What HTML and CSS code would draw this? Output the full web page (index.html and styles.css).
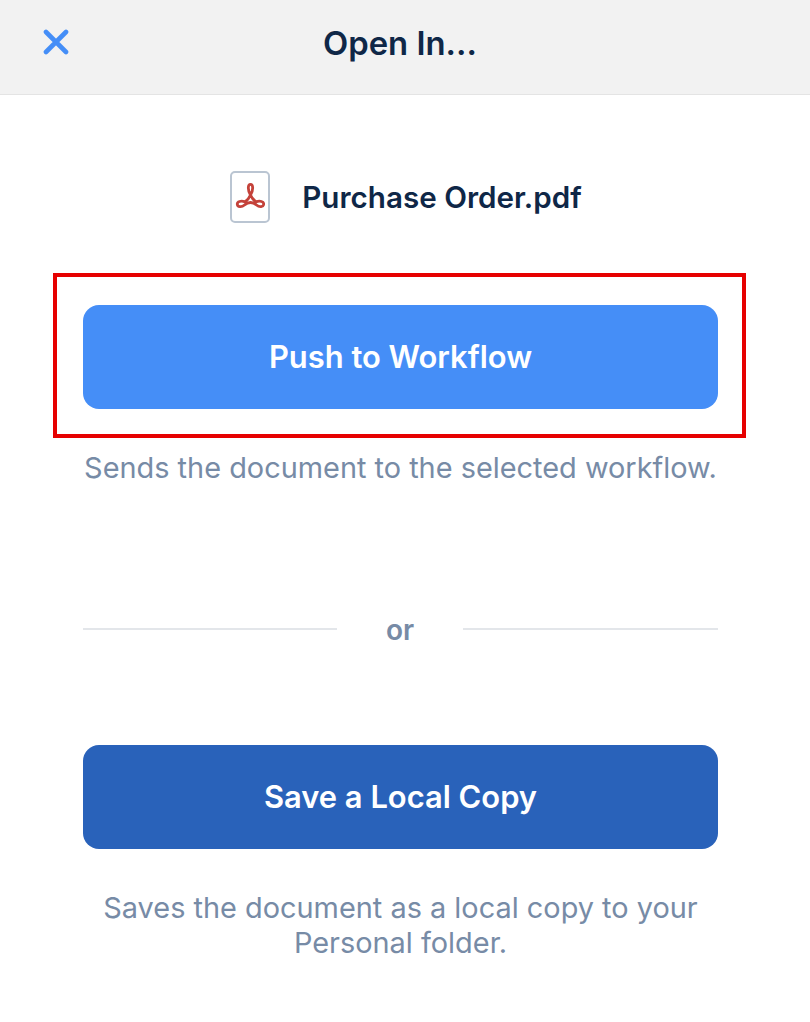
FILE: index.html
```html
<!DOCTYPE html>
<html lang="en">
<head>
<meta charset="utf-8">
<title>Open In...</title>
<link rel="stylesheet" href="styles.css">
</head>
<body>
<header class="topbar">
  <button class="close" aria-label="Close">
    <svg width="26" height="26" viewBox="0 0 26 26"><path d="M3 3 L23 23 M23 3 L3 23" fill="none" stroke="#458ef7" stroke-width="4.6" stroke-linecap="round"/></svg>
  </button>
  <h1 class="title">Open In...</h1>
</header>
<main class="content">
  <div class="file">
    <div class="file-icon">
      <svg width="30" height="30" viewBox="0 0 30 30"><path d="M15.500 13 C12.500 8 12.700 2.300 15.500 2.300 C18.300 2.300 18.500 8 15.500 13 C14.500 15.500 12.500 18 10 19.800 C6 18.500 2 19.500 2.300 22.300 C2.600 25 6.500 25.500 9.500 23 C11.500 21.300 13.500 20.500 15.500 20.500 C17.500 20.500 19.500 21.300 21.500 23 C24.500 25.500 28.400 25 28.700 22.300 C29 19.500 25 18.500 21 19.800 C18.500 18 16.500 15.500 15.500 13 Z" fill="none" stroke="#c4423a" stroke-width="2.800" stroke-linejoin="round"/></svg>
    </div>
    <span class="file-name">Purchase Order.pdf</span>
  </div>
  <div class="highlight">
    <button class="btn btn-primary">Push to Workflow</button>
  </div>
  <p class="hint hint-first">Sends the document to the selected workflow.</p>
  <div class="divider"><span class="rule"></span><span class="or">or</span><span class="rule"></span></div>
  <button class="btn btn-secondary">Save a Local Copy</button>
  <p class="hint hint-last">Saves the document as a local copy to your<br>Personal folder.</p>
</main>
</body>
</html>
```
FILE: styles.css
```css
* { box-sizing: border-box; }
html, body { margin: 0; padding: 0; }
body {
  width: 810px;
  height: 1022px;
  overflow: hidden;
  background: #fff;
  font-family: Inter, "Liberation Sans", sans-serif;
  color: #0f2747;
}
.topbar {
  height: 95px;
  background: #f2f2f2;
  border-bottom: 1px solid #e4e4e4;
  padding-right: 10px;
  display: flex;
  align-items: center;
  justify-content: center;
  position: relative;
}
.close {
  position: absolute;
  left: 43px;
  top: 29px;
  width: 26px;
  height: 26px;
  padding: 0;
  border: 0;
  background: none;
  line-height: 0;
}
.title {
  margin: 0 0 8px;
  font-size: 32.800px;
  font-weight: 600;
  letter-spacing: 0;
}
.content {
  width: 801px;
  display: flex;
  flex-direction: column;
  align-items: center;
}
.file {
  margin-top: 76px;
  margin-left: 11px;
  height: 52px;
  display: flex;
  align-items: center;
  gap: 32px;
}
.file-icon {
  width: 40px;
  height: 52px;
  border: 2px solid #bac5d2;
  border-radius: 5px;
  display: flex;
  align-items: center;
  justify-content: center;
}
.file-name {
  font-size: 29.600px;
  font-weight: 600;
}
.highlight {
  margin-top: 50px;
  margin-right: 2px;
  width: 693px;
  height: 165px;
  border: 4px solid #e60000;
  padding: 28px 24px 25px 26px;
  display: flex;
}
.btn {
  height: 104px;
  width: 635px;
  flex: none;
  border: 0;
  border-radius: 16px;
  padding: 0 0 2px;
  color: #fff;
  font-family: inherit;
  font-size: 30.900px;
  font-weight: 600;
}
.btn-primary { background: #458ef7; }
.btn-secondary { background: #2962ba; }
.hint {
  margin: 0;
  text-align: center;
  color: #778ba6;
  font-size: 28.900px;
  line-height: 36px;
}
.hint-first { margin-top: 12px; }
.hint-last { margin-top: 41px; line-height: 35px; }
.divider {
  margin-top: 125px;
  margin-bottom: 98px;
  width: 635px;
  display: grid;
  grid-template-columns: 254px 126px 255px;
  align-items: center;
}
.rule { height: 2px; background: #e3e6ea; }
.or {
  padding-top: 2px;
  text-align: center;
  font-size: 28px;
  font-weight: 600;
  color: #778ba6;
  line-height: 34px;
}
```
